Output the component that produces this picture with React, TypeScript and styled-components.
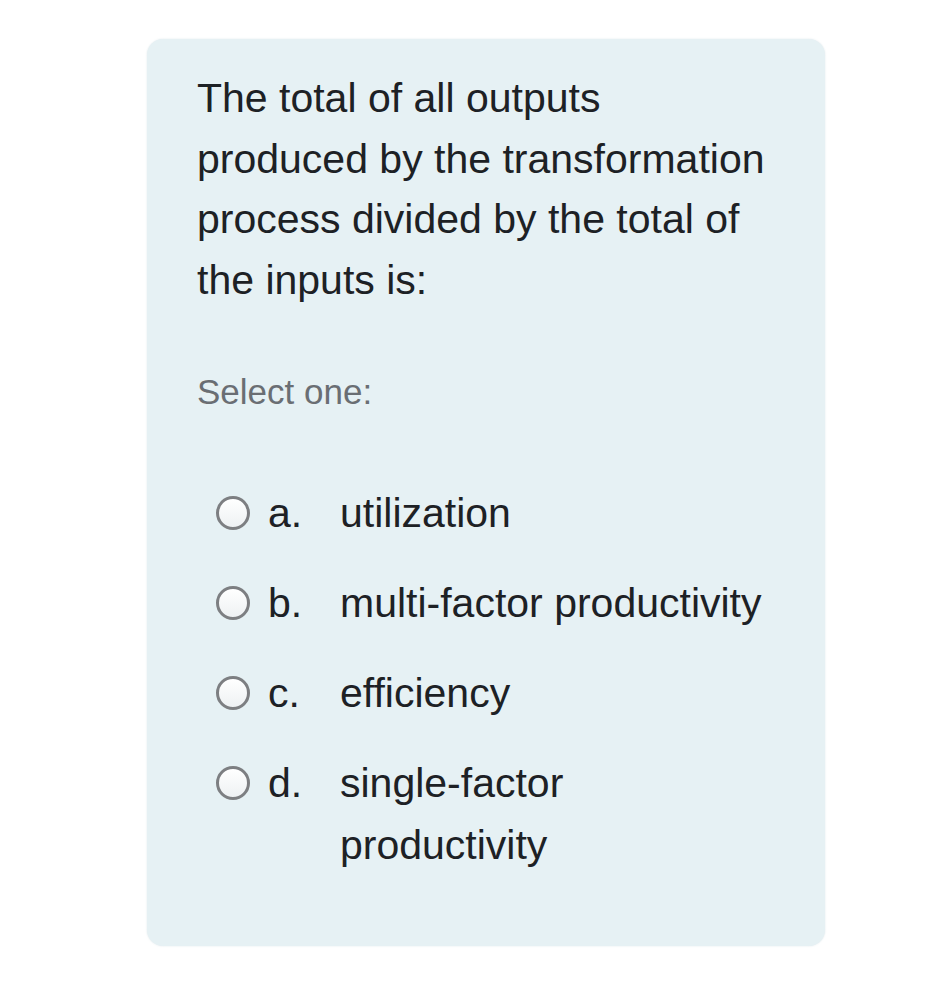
import React from 'react';
import styled, { createGlobalStyle } from 'styled-components';

const GlobalStyle = createGlobalStyle`
  html, body {
    margin: 0;
    padding: 0;
    background: #ffffff;
  }
  body {
    font-family: "Liberation Sans", Arial, sans-serif;
  }
`;

const Page = styled.div`
  padding: 39px 0 38px 147px;
`;

const Card = styled.div`
  box-sizing: border-box;
  width: 678px;
  min-height: 907px;
  padding: 29px 50px 68px 50px;
  background: #e6f1f4;
  border-radius: 16px;
  box-shadow: 0 0 2px rgba(200, 215, 222, 0.6);
`;

const Question = styled.div`
  font-size: 41px;
  line-height: 60.5px;
  color: #1d2125;
`;

const Prompt = styled.div`
  margin-top: 57px;
  font-size: 35px;
  line-height: 50px;
  color: #6a6e73;
`;

const Options = styled.div`
  margin-top: 65px;
  display: flex;
  flex-direction: column;
  gap: 28px;
`;

const Option = styled.label`
  display: grid;
  grid-template-columns: 34px 54px 1fr;
  column-gap: 18px;
  padding-left: 19px;
  font-size: 41px;
  line-height: 62px;
  color: #1d2125;
`;

const Radio = styled.span`
  box-sizing: border-box;
  width: 34px;
  height: 34px;
  margin-top: 14px;
  border-radius: 50%;
  border: 3px solid #7d7f82;
  background: linear-gradient(#ffffff, #eef1f3);
`;

const Letter = styled.span``;

const Label = styled.span``;

const options = [
  { letter: 'a.', text: 'utilization' },
  { letter: 'b.', text: 'multi-factor productivity' },
  { letter: 'c.', text: 'efficiency' },
  { letter: 'd.', text: 'single-factor productivity' },
];

export default function App() {
  return (
    <>
      <GlobalStyle />
      <Page>
        <Card>
          <Question>
            The total of all outputs produced by the transformation process divided by the total of the inputs is:
          </Question>
          <Prompt>Select one:</Prompt>
          <Options>
            {options.map((o) => (
              <Option key={o.letter}>
                <Radio />
                <Letter>{o.letter}</Letter>
                <Label>{o.text}</Label>
              </Option>
            ))}
          </Options>
        </Card>
      </Page>
    </>
  );
}
